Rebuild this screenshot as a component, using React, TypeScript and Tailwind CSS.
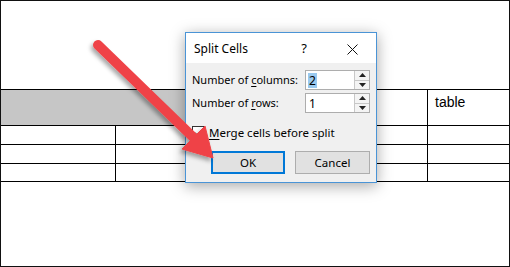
import React from 'react';

function Spin() {
  return (
    <div className="flex h-full w-[15px] flex-col border-l border-[#c8c8c8]">
      <div className="flex flex-1 items-center justify-center border-b border-[#c8c8c8] bg-[#f4f4f4]">
        <svg width="7" height="4" viewBox="0 0 7 4"><path d="M0 4 L3.5 0 L7 4 Z" fill="#222" /></svg>
      </div>
      <div className="flex flex-1 items-center justify-center bg-[#f4f4f4]">
        <svg width="7" height="4" viewBox="0 0 7 4"><path d="M0 0 L3.5 4 L7 0 Z" fill="#222" /></svg>
      </div>
    </div>
  );
}

function NumberField({ value, selected }: { value: string; selected?: boolean }) {
  return (
    <div className="flex h-[20px] w-[65px] shrink-0 items-stretch border border-[#adadad] bg-white text-[12px]">
      <div className="flex flex-1 items-center pl-[2px]">
        <span className={selected ? 'bg-[#99c9ef] px-[1px] leading-[15px]' : 'px-[1px] leading-[15px]'}>{value}</span>
      </div>
      <Spin />
    </div>
  );
}

function Dialog() {
  return (
    <div className="absolute left-[184px] top-[31px] flex h-[151px] w-[192px] flex-col border border-[#4a94d6] bg-[#f0f0f0] font-['Noto_Sans',sans-serif] text-[11px] text-black shadow-[0_3px_14px_rgba(0,0,0,0.35)]">
      {/* Title bar */}
      <div className="flex h-[30px] items-center bg-white pl-[8px] pr-[18px] pt-[2px]">
        <span className="flex-1 whitespace-nowrap text-[12px]">Split Cells</span>
        <span className="mr-[40px] text-[13px]">?</span>
        <svg width="11" height="11" viewBox="0 0 11 11">
          <path d="M0.5 0.5 L10.5 10.5 M10.5 0.5 L0.5 10.5" stroke="#111" strokeWidth="1" />
        </svg>
      </div>

      {/* Body */}
      <div className="flex flex-1 flex-col px-[6px] pt-[7px]">
        <div className="flex h-[20px] items-center justify-between">
          <span className="whitespace-nowrap">
            Number of <span className="underline underline-offset-2">c</span>olumns:
          </span>
          <NumberField value="2" selected />
        </div>
        <div className="mt-[3px] flex h-[20px] items-center justify-between">
          <span className="whitespace-nowrap">
            Number of <span className="underline underline-offset-2">r</span>ows:
          </span>
          <NumberField value="1" />
        </div>

        <div className="mt-[13px] flex h-[13px] items-center gap-[4px]">
          <div className="flex h-[13px] w-[13px] items-center justify-center border border-[#333] bg-white">
            <svg width="9" height="8" viewBox="0 0 9 8">
              <path d="M1 4 L3.5 6.5 L8 1" fill="none" stroke="#222" strokeWidth="1.3" />
            </svg>
          </div>
          <span className="whitespace-nowrap text-[11.5px]">
            <span className="underline underline-offset-2">M</span>erge cells before split
          </span>
        </div>

        <div className="mt-[12px] flex justify-end gap-[10px] text-[11.5px]">
          <button className="flex h-[23px] w-[74px] items-center justify-center border-2 border-[#0078d7] bg-[#e1e1e1]">
            OK
          </button>
          <button className="flex h-[23px] w-[75px] items-center justify-center border border-[#adadad] bg-[#e1e1e1]">
            Cancel
          </button>
        </div>
      </div>
    </div>
  );
}

function Arrow() {
  return (
    <svg className="pointer-events-none absolute left-0 top-0" width="510" height="267" viewBox="0 0 510 267">
      <defs>
        <filter id="arrowShadow" x="-20%" y="-20%" width="140%" height="140%">
          <feDropShadow dx="-2" dy="3" stdDeviation="2" floodColor="#000" floodOpacity="0.35" />
        </filter>
      </defs>
      <g filter="url(#arrowShadow)" fill="#ef4347" stroke="#ef4347">
        <line x1="97" y1="44" x2="194" y2="138" strokeWidth="10" strokeLinecap="round" />
        <polygon points="212,157 181,148 204,125" strokeWidth="1" strokeLinejoin="round" />
      </g>
    </svg>
  );
}

export default function App() {
  return (
    <div className="relative h-[267px] w-[510px] overflow-hidden border border-[#111] bg-white font-['Liberation_Sans',sans-serif]">
      <div className="h-[88px]" />

      {/* Table */}
      <div className="border-t border-black">
        <div className="flex h-[36px] border-b border-black">
          <div className="w-[300px] bg-[#c6c6c6]" />
          <div className="flex-1 border-r border-black" />
          <div className="w-[81px] pl-[7px] pt-[2px] text-[14px] text-black">table</div>
        </div>
        {[19, 19, 18].map((h, i) => (
          <div key={i} className="flex border-b border-black" style={{ height: h }}>
            <div className="w-[115px] border-r border-black" />
            <div className="flex-1 border-r border-black" />
            <div className="w-[81px]" />
          </div>
        ))}
      </div>

      <Dialog />
      <Arrow />
    </div>
  );
}
